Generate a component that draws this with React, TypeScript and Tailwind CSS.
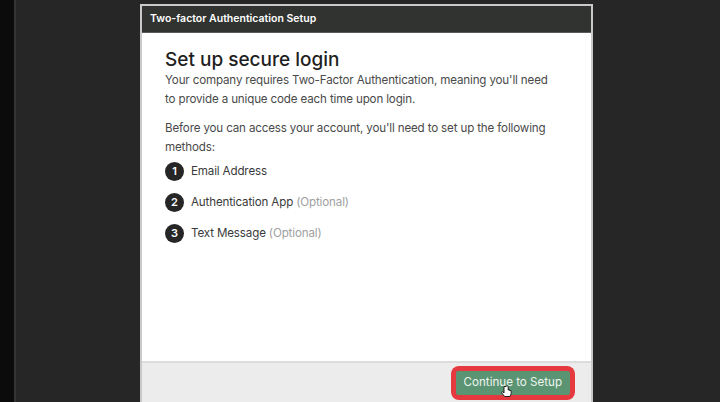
import React from "react";

function Step({ n, label, optional }: { n: number; label: string; optional?: boolean }) {
  return (
    <div className="flex items-center h-[31px]">
      <div className="w-[19px] h-[19px] rounded-full bg-[#262626] text-white text-[11px] font-semibold flex items-center justify-center">
        {n}
      </div>
      <div className="ml-[7px] text-[11.6px] tracking-[-0.15px] text-[#3a3a3a] whitespace-nowrap">
        {label}
        {optional && <span className="text-[#a0a0a0]"> (Optional)</span>}
      </div>
    </div>
  );
}

export default function App() {
  return (
    <div
      className="w-[720px] h-[402px] overflow-hidden flex bg-[#262626]"
      style={{ fontFamily: "Inter, 'Noto Sans', sans-serif" }}
    >
      <div className="w-[14px] h-full bg-[#0b0b0b]" />
      <div className="w-[2px] h-full bg-[#333333]" />
      <div className="flex-1 flex">
        <div className="ml-[124px] mt-[4px] w-[453px] h-[420px] border-2 border-[#c9c9c9] flex flex-col bg-white">
          <div className="h-[27px] bg-[#313330] flex items-center pl-[8px] text-white text-[10.5px] font-semibold border-b border-[#5a5a5a]">
            Two-factor Authentication Setup
          </div>
          <div className="h-[328px] px-[23px] pt-[15px] bg-white">
            <div className="text-[19px] font-medium text-[#1f1f1f] leading-[23px]">Set up secure login</div>
            <div className="text-[11.6px] tracking-[-0.15px] leading-[19px] text-[#4a4a4a] whitespace-nowrap">
              Your company requires Two-Factor Authentication, meaning you'll need
              <br />
              to provide a unique code each time upon login.
            </div>
            <div className="mt-[10px] text-[11.6px] tracking-[-0.15px] leading-[19px] text-[#4a4a4a] whitespace-nowrap">
              Before you can access your account, you'll need to set up the following
              <br />
              methods:
            </div>
            <div className="-mt-[1px] flex flex-col">
              <Step n={1} label="Email Address" />
              <Step n={2} label="Authentication App" optional />
              <Step n={3} label="Text Message" optional />
            </div>
          </div>
          <div className="flex-1 bg-[#ececec] border-t-2 border-[#dcdcdc] flex justify-end items-start pr-[16px] pt-[3px]">
            <div className="relative rounded-[8px] bg-[#e5393f] p-[5px]">
              <div className="bg-[#5b9472] text-[#eef5ef] text-[11.6px] px-[8px] h-[24px] flex items-center rounded-[2px] whitespace-nowrap">
                Continue to Setup
              </div>
              <svg className="absolute left-[50px] top-[19px]" width="12" height="14" viewBox="0 0 12 14">
                <path
                  d="M3 1.5 v6.5 l-1-1 c-0.8-0.7-1.8 0.2-1.2 1 l2.8 3.5 h5.4 l1.2-3 v-2.5 c0-0.8-1-0.8-1 0 v-0.5 c0-0.8-1-0.8-1 0 v-0.5 c0-0.8-1-0.8-1 0 v-3.5 c0-0.9-2.2-0.9-2.2 0z"
                  fill="#ffffff"
                  stroke="#111"
                  strokeWidth="0.9"
                />
              </svg>
            </div>
          </div>
        </div>
      </div>
    </div>
  );
}
